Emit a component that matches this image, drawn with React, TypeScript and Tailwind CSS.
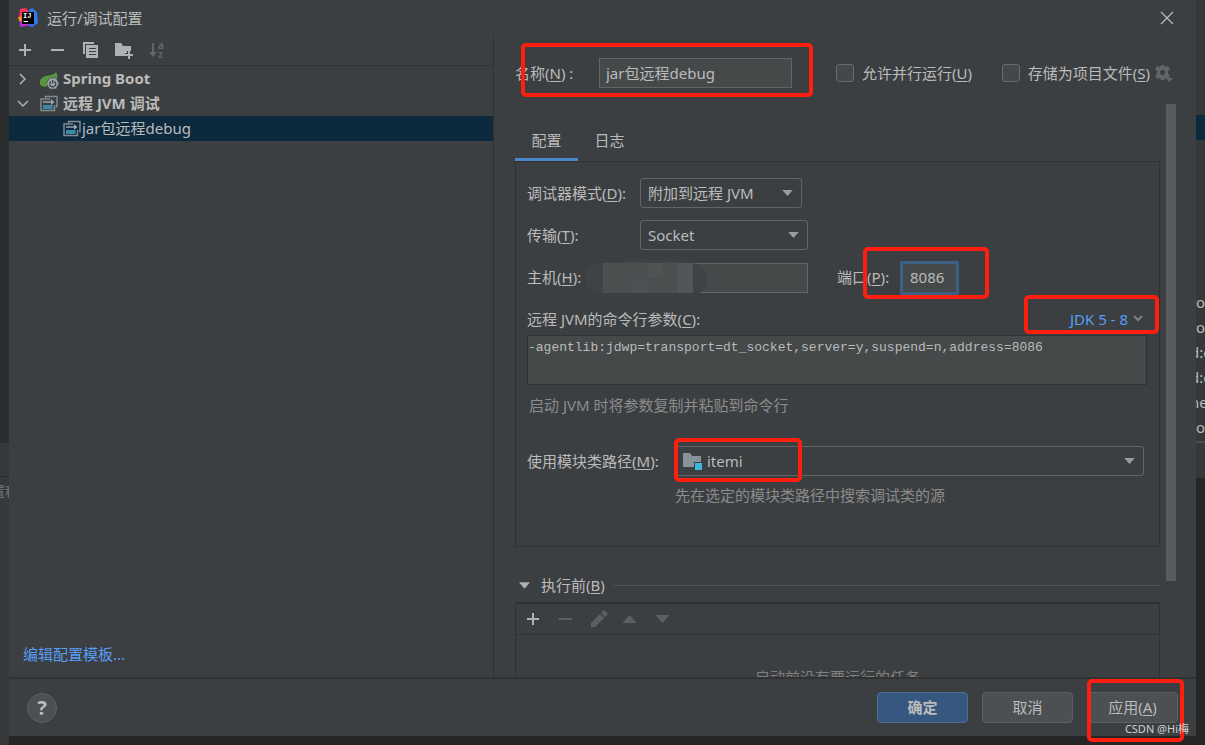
import type { ReactNode } from 'react';

const REMOTE_ARGS = '-agentlib:jdwp=transport=dt_socket,server=y,suspend=n,address=8086';

// Menu label with its underlined mnemonic, e.g. 名称(N)
function Mnemonic({ text, letter, colon }: { text: string; letter: string; colon?: boolean }) {
  return (
    <>
      {text}(<span className="underline underline-offset-2">{letter}</span>){colon && ':'}
    </>
  );
}

function Highlight({ className }: { className: string }) {
  return (
    <span
      aria-hidden="true"
      className={`pointer-events-none absolute z-10 rounded-[5px] border-4 border-[#ff1f10] ${className}`}
    />
  );
}

function Triangle({ className = '', up }: { className?: string; up?: boolean }) {
  return (
    <svg viewBox="0 0 14 8" className={className} fill="currentColor" aria-hidden="true">
      <path d={up ? 'M7 0L14 8H0Z' : 'M0 0H14L7 8Z'} />
    </svg>
  );
}

function Dropdown({
  id,
  value,
  className,
  selectClass = 'pl-[7px]',
  children,
}: {
  id: string;
  value: string;
  className: string;
  selectClass?: string;
  children?: ReactNode;
}) {
  return (
    <div className={`relative ${className}`}>
      <select
        id={id}
        defaultValue={value}
        className={`block h-[30px] w-full appearance-none rounded-[3px] border border-[#646464] bg-[#3c3f41] text-[#bbbbbb] outline-none ${selectClass}`}
      >
        <option>{value}</option>
      </select>
      <Triangle className="pointer-events-none absolute top-3 right-[9px] h-[6px] w-[11px] text-[#9a9da0]" />
      {children}
    </div>
  );
}

function IdeaLogo() {
  return (
    <svg viewBox="0 0 20 20" className="size-5" aria-hidden="true">
      <path d="M2 1L8 0L12 5L6 12L1 9Z" fill="#fe315d" />
      <path d="M0 9L6 8L5 15L1 13Z" fill="#fb8a1e" />
      <path d="M11 2L14 0L19 4L20 15L14 19L9 15Z" fill="#2f7cf2" />
      <path d="M2 13L8 13L13 17L7 18L2 19Z" fill="#c02fd0" />
      <path d="M11 16L18 14L15 19L10 18Z" fill="#4062e8" />
      <rect x="4" y="4" width="12" height="12" fill="#000" />
      <text x="5" y="10" fill="#fff" className="font-['Liberation_Mono',monospace] text-[7px] font-bold">IJ</text>
      <path d="M5.5 13.5H10" stroke="#fff" />
    </svg>
  );
}

function PlusIcon() {
  return (
    <svg viewBox="0 0 14 14" className="size-[14px]" fill="currentColor" aria-hidden="true">
      <path d="M6 1H8V6H13V8H8V13H6V8H1V6H6Z" />
    </svg>
  );
}

function MinusIcon() {
  return (
    <svg viewBox="0 0 14 14" className="size-[14px]" fill="currentColor" aria-hidden="true">
      <path d="M1 6H14V8H1Z" />
    </svg>
  );
}

function CopyIcon() {
  return (
    <svg viewBox="0 0 18 18" className="size-[18px]" aria-hidden="true">
      <path d="M1 1H12V3H3V13H1Z" fill="#afb1b3" />
      <path d="M4 4H16V17H4Z" fill="#afb1b3" />
      <path d="M7 7.5H14M7 10.5H14M7 13.5H14" stroke="#3c3f41" />
    </svg>
  );
}

function FolderAddIcon() {
  return (
    <svg viewBox="0 0 20 18" className="h-[18px] w-5" aria-hidden="true">
      <path d="M1 2H7L9 5H17V10H13V12H11V15H1Z" fill="#afb1b3" />
      <path d="M14 10H16V13H19V15H16V18H14V15H11V13H14Z" fill="#afb1b3" />
    </svg>
  );
}

function SortIcon() {
  return (
    <svg viewBox="0 0 18 18" className="size-[18px] overflow-visible" fill="#626567" aria-hidden="true">
      <path d="M4 2H6V11H9L5 16L1 11H4Z" />
      <text x="10" y="8" className="text-[10px] font-bold">a</text>
      <text x="10" y="17" className="text-[10px] font-bold">z</text>
    </svg>
  );
}

function SpringIcon() {
  return (
    <svg viewBox="0 0 20 18" className="h-[18px] w-5" aria-hidden="true">
      <path d="M17 0C15 3 11 3 7 4C2 5 0 9 1 12C1.500 14 4 15 8 14.500L10 9L18 7C19 4 18 2 17 0Z" fill="#59963f" />
      <path d="M10.500 6H17L20 11.500L17 17H10.500L7.500 11.500Z" fill="#9aa7b0" stroke="#3c3f41" strokeWidth="0.600" />
      <path d="M12 9.500A3 3 0 1 0 15.500 9.500M13.750 8V11.500" fill="none" stroke="#3c3f41" strokeWidth="1.300" />
    </svg>
  );
}

function RemoteIcon() {
  return (
    <svg viewBox="0 0 18 18" className="size-[18px]" fill="none" aria-hidden="true">
      <path d="M5.500 3V1.500H17V11.500H16" stroke="#7f8b93" strokeWidth="1.500" />
      <path d="M10 4H1V15.500H14.500V10" stroke="#7f8b93" strokeWidth="1.500" />
      <path d="M3 10H12.500V14H3Z" fill="#3a8aa6" />
      <path d="M3 7H13" stroke="#9aa7b0" strokeWidth="1.500" />
      <path d="M11 4L14.500 7L11 10Z" fill="#9aa7b0" />
    </svg>
  );
}

function GearIcon() {
  return (
    <svg viewBox="0 0 20 20" className="size-5" aria-hidden="true">
      <path
        fillRule="evenodd"
        fill="#626466"
        d="M7 2H10L11 4L14 3L16 6L14 8V11L16 13L14 16L11 15L10 17H7L6 15L3 16L1 13L3 11V8L1 6L3 3L6 4ZM8.500 7A2.500 2.500 0 1 0 8.500 12A2.500 2.500 0 1 0 8.500 7Z"
      />
      <path d="M12 15H19L15.500 19Z" fill="#626466" />
    </svg>
  );
}

function ModuleIcon() {
  return (
    <svg viewBox="0 0 20 18" className="pointer-events-none absolute top-[7px] left-2 h-[18px] w-5" aria-hidden="true">
      <path d="M0 0H7L9 3H18V9H11V14H0Z" fill="#87939a" />
      <path d="M12 10H19V17H12Z" fill="#40b6e0" />
    </svg>
  );
}

function PencilIcon() {
  return (
    <svg viewBox="0 0 18 18" className="size-[18px]" fill="#5e6060" aria-hidden="true">
      <path d="M1 13L10 4L14 8L5 17H1Z" />
      <path d="M11 3L13 1Q14 0 15 1L17 3Q18 4 17 5L15 7Z" />
    </svg>
  );
}

function Chevron({ open }: { open?: boolean }) {
  return (
    <svg viewBox="0 0 12 12" className="size-3" fill="none" stroke="#afb1b3" strokeWidth="1.500" aria-hidden="true">
      <path d={open ? 'M1 3L6 8L11 3' : 'M3 1L8 6L3 11'} />
    </svg>
  );
}

// Pixelated patch that hides the host address
function HostMask() {
  return (
    <svg viewBox="0 0 122 34" className="pointer-events-none absolute -top-[3px] -left-[15px] h-[34px] w-[122px]" aria-hidden="true">
      <path d="M10 3Q60 -2 105 2Q122 6 122 18Q122 30 115 33H8Q0 28 0 18Q0 8 10 3Z" fill="#404345" />
      <rect x="18" y="3" width="90" height="30" fill="#4c4f50" />
      <rect x="63" y="3" width="15" height="15" fill="#505354" />
      <rect x="48" y="18" width="15" height="15" fill="#4e5153" />
      <rect x="93" y="3" width="15" height="30" fill="#535658" />
    </svg>
  );
}

function ConfigTree() {
  return (
    <aside className="flex w-[485px] shrink-0 flex-col border-r border-[#323232]">
      <div className="flex h-[30px] shrink-0 items-center gap-[18px] border-b border-[#323232] pb-[2px] pl-[9px] text-[#afb1b3]">
        <button aria-label="添加"><PlusIcon /></button>
        <button aria-label="移除"><MinusIcon /></button>
        <button aria-label="复制"><CopyIcon /></button>
        <button aria-label="新建文件夹" className="-ml-1"><FolderAddIcon /></button>
        <button aria-label="排序" className="-ml-1" disabled><SortIcon /></button>
      </div>
      <ul className="leading-[25px]">
        <li className="flex h-[25px] items-center pl-2 font-bold">
          <Chevron />
          <span className="mr-1 ml-[10px] pt-1"><SpringIcon /></span>
          Spring Boot
        </li>
        <li>
          <div className="flex h-[25px] items-center pl-2 font-bold">
            <Chevron open />
            <span className="mr-[5px] ml-[11px]"><RemoteIcon /></span>
            远程 JVM 调试
          </div>
          <ul>
            <li className="flex h-[25px] items-center gap-px bg-[#0d293e] pl-[54px]">
              <RemoteIcon />
              jar包远程debug
            </li>
          </ul>
        </li>
      </ul>
      <a href="#templates" className="mt-auto mb-[11px] ml-[14px] self-start leading-6 text-[#589df6]">
        编辑配置模板...
      </a>
    </aside>
  );
}

function NameRow() {
  return (
    <div className="flex h-[67px] shrink-0 items-center pt-[7px] pr-[22px]">
      <div className="relative flex items-center">
        <label htmlFor="name" className="w-[84px]">
          <Mnemonic text="名称" letter="N" /> :
        </label>
        <input
          id="name"
          defaultValue="jar包远程debug"
          className="h-[30px] w-[193px] border border-[#646464] bg-[#45494a] px-[6px] pb-px outline-none"
        />
        <Highlight className="-top-[15px] -right-[21px] -bottom-[9px] left-[6px]" />
      </div>
      <label className="ml-[44px] flex items-center gap-2">
        <input type="checkbox" className="size-[18px] appearance-none rounded-[3px] border border-[#6b6b6b] bg-[#43494a]" />
        <span><Mnemonic text="允许并行运行" letter="U" /></span>
      </label>
      <label className="ml-auto flex items-center gap-2">
        <input type="checkbox" className="size-[18px] appearance-none rounded-[3px] border border-[#6b6b6b] bg-[#43494a]" />
        <span><Mnemonic text="存储为项目文件" letter="S" /></span>
      </label>
      <button aria-label="存储设置" className="ml-1"><GearIcon /></button>
    </div>
  );
}

function SettingsPanel() {
  return (
    <section className="h-[386px] border border-[#323232] pt-4 pr-3 pl-[11px]">
      <div className="space-y-3">
        <div className="flex h-[30px] items-center">
          <label htmlFor="mode" className="w-[113px]"><Mnemonic text="调试器模式" letter="D" colon /></label>
          <Dropdown id="mode" value="附加到远程 JVM" className="w-[162px]" />
        </div>
        <div className="flex h-[30px] items-center">
          <label htmlFor="transport" className="w-[113px]"><Mnemonic text="传输" letter="T" colon /></label>
          <Dropdown id="transport" value="Socket" className="w-[168px]" />
        </div>
        <div className="flex h-[31px] items-center">
          <label htmlFor="host" className="w-[73px]"><Mnemonic text="主机" letter="H" colon /></label>
          <div className="relative w-[208px]">
            <input id="host" className="block h-[30px] w-full border border-[#646464] bg-[#45494a] px-2 outline-none" />
            <HostMask />
          </div>
          <div className="relative ml-[29px] flex items-center">
            <label htmlFor="port" className="w-[63px]"><Mnemonic text="端口" letter="P" colon /></label>
            <input
              id="port"
              defaultValue="8086"
              className="h-[34px] w-[59px] rounded-[2px] border-[3px] border-[#3d6185] bg-[#45494a] px-[7px] pb-px outline-none"
            />
            <Highlight className="-top-[14px] -right-[30px] -bottom-1 left-[26px]" />
          </div>
        </div>
      </div>

      <div className="mt-[14px] flex h-6 items-center justify-between">
        <label htmlFor="args"><Mnemonic text="远程 JVM的命令行参数" letter="C" colon /></label>
        <button className="relative flex items-center gap-1 pr-[3px] text-[#589df6]">
          JDK 5 - 8
          <svg viewBox="0 0 12 12" className="size-3" fill="none" stroke="#7d8185" strokeWidth="2" aria-hidden="true">
            <path d="M2 3L6 7L10 3" />
          </svg>
          <Highlight className="-top-[13px] -right-3 -bottom-1 -left-[46px]" />
        </button>
      </div>
      <textarea
        id="args"
        readOnly
        value={REMOTE_ARGS}
        className="mt-1 block h-[50px] w-full resize-none border border-[#323232] bg-[#45494a] font-['Liberation_Mono',monospace] text-[13px] leading-6 text-[#bbbbbb] outline-none"
      />
      <p className="mt-2 pl-[2px] leading-6 text-[#8c8c8c]">启动 JVM 时将参数复制并粘贴到命令行</p>

      <div className="mt-[29px] mr-[3px] flex items-center">
        <label htmlFor="module" className="w-[148px] shrink-0"><Mnemonic text="使用模块类路径" letter="M" colon /></label>
        <Dropdown id="module" value="itemi" className="flex-1" selectClass="pl-[31px]">
          <ModuleIcon />
          <Highlight className="-top-2 -bottom-[6px] -left-px w-[128px]" />
        </Dropdown>
      </div>
      <p className="mt-[7px] pl-[148px] leading-6 text-[#8c8c8c]">先在选定的模块类路径中搜索调试类的源</p>
    </section>
  );
}

function BeforeLaunch() {
  return (
    <section className="pt-[26px]">
      <div className="flex h-6 items-center pl-1">
        <Triangle className="h-[7px] w-[11px] text-[#afb1b3]" />
        <h2 className="mr-2 ml-[11px]"><Mnemonic text="执行前" letter="B" /></h2>
        <span className="h-px flex-1 bg-[#515151]" />
      </div>
      <div className="mt-[5px] h-[150px] border border-t-2 border-[#323232]">
        <div className="flex h-[31px] items-center gap-[18px] border-b border-[#323232] pl-[10px] text-[#5e6060]">
          <button aria-label="添加任务" className="text-[#afb1b3]"><PlusIcon /></button>
          <button aria-label="移除任务" disabled><MinusIcon /></button>
          <button aria-label="编辑任务" disabled><PencilIcon /></button>
          <button aria-label="上移" className="-ml-1" disabled><Triangle up className="h-2 w-[15px]" /></button>
          <button aria-label="下移" disabled><Triangle className="h-2 w-[15px]" /></button>
        </div>
        <p className="pt-[30px] text-center leading-6 text-[#808080]">启动前没有要运行的任务</p>
      </div>
    </section>
  );
}

function Footer() {
  const plain = 'h-[31px] w-[91px] rounded-[4px] border border-[#5e6060] bg-[#4c5052]';
  return (
    <footer className="flex h-[59px] shrink-0 items-center border-t-2 border-[#323232] pr-[18px] pl-[18px]">
      <button aria-label="帮助" className="size-[30px] rounded-full border border-[#5e6060] bg-[#4c5052] text-[20px] leading-7 font-bold">
        ?
      </button>
      <div className="ml-auto flex gap-[14px]">
        <button className="h-[31px] w-[91px] rounded-[4px] border border-[#4c708c] bg-[#365880] font-bold">确定</button>
        <button className={plain}>取消</button>
        <div className="relative">
          <button className={plain}><Mnemonic text="应用" letter="A" /></button>
          <Highlight className="-top-[13px] -right-[6px] -bottom-[19px] left-0" />
          <span className="absolute top-[29px] -right-[11px] z-20 text-[11px] leading-4 whitespace-nowrap text-[#d0d0d0]">CSDN @Hi梅</span>
        </div>
      </div>
    </footer>
  );
}

export default function App() {
  return (
    <div className="flex h-screen min-h-[600px] overflow-hidden bg-[#262626] font-['Noto_Sans','Noto_Sans_CJK_SC',sans-serif] text-[15px] text-[#bbbbbb]">
      <div className="flex w-[9px] shrink-0 flex-col overflow-hidden bg-[#303234]">
        <div className="h-[443px] bg-[#2b2c2e]" />
        <div className="h-[34px] border-b border-[#2b2b2b] bg-[#36383a]" />
        <div className="flex-1 bg-[#36383a] pt-1 text-[13px] leading-5 text-[#75787a]">
          <span className="-ml-2 block whitespace-nowrap">置程</span>
        </div>
      </div>

      <main className="mb-[9px] flex min-w-0 flex-1 flex-col bg-[#3c3f41]">
        <header className="flex h-9 shrink-0 items-center pr-[22px] pl-[9px]">
          <IdeaLogo />
          <h1 className="ml-[9px]">运行/调试配置</h1>
          <button aria-label="关闭" className="ml-auto">
            <svg viewBox="0 0 14 14" className="size-[14px]" stroke="#bbbbbb" strokeWidth="1.200" aria-hidden="true">
              <path d="M1 1L13 13M13 1L1 13" />
            </svg>
          </button>
        </header>

        <div className="flex min-h-0 flex-1">
          <ConfigTree />
          <div className="flex min-w-0 flex-1 flex-col pl-[21px]">
            <NameRow />
            <div className="flex min-h-0 flex-1 gap-[6px] overflow-hidden pr-5">
              <div className="min-w-0 flex-1">
                <div role="tablist" className="flex h-[58px] items-end">
                  <button role="tab" aria-selected="true" className="h-[39px] w-[63px] border-b-[3px] border-[#4a88c7]">配置</button>
                  <button role="tab" aria-selected="false" className="h-[39px] w-[63px] border-b-[3px] border-transparent">日志</button>
                </div>
                <SettingsPanel />
                <BeforeLaunch />
              </div>
              <div className="mt-px h-[477px] w-[10px] shrink-0 bg-[#595b5d]" />
            </div>
          </div>
        </div>
        <Footer />
      </main>

      <div className="flex w-[9px] shrink-0 flex-col overflow-hidden bg-[#262626]">
        <div className="h-[115px] bg-[#353739]" />
        <div className="h-[25px] bg-[#0d293e]" />
        <div className="h-[301px] bg-[#353739] pt-[150px] leading-[25px] whitespace-nowrap">
          {['ro', 'ro', 'd:c', 'd:c', 'ne', 'ro'].map((t, i) => (
            <div key={i} className="-ml-[6px]">{t}</div>
          ))}
        </div>
        <div className="h-[37px] border-t-2 border-[#4a4c4e] bg-[#353739]" />
      </div>
    </div>
  );
}
